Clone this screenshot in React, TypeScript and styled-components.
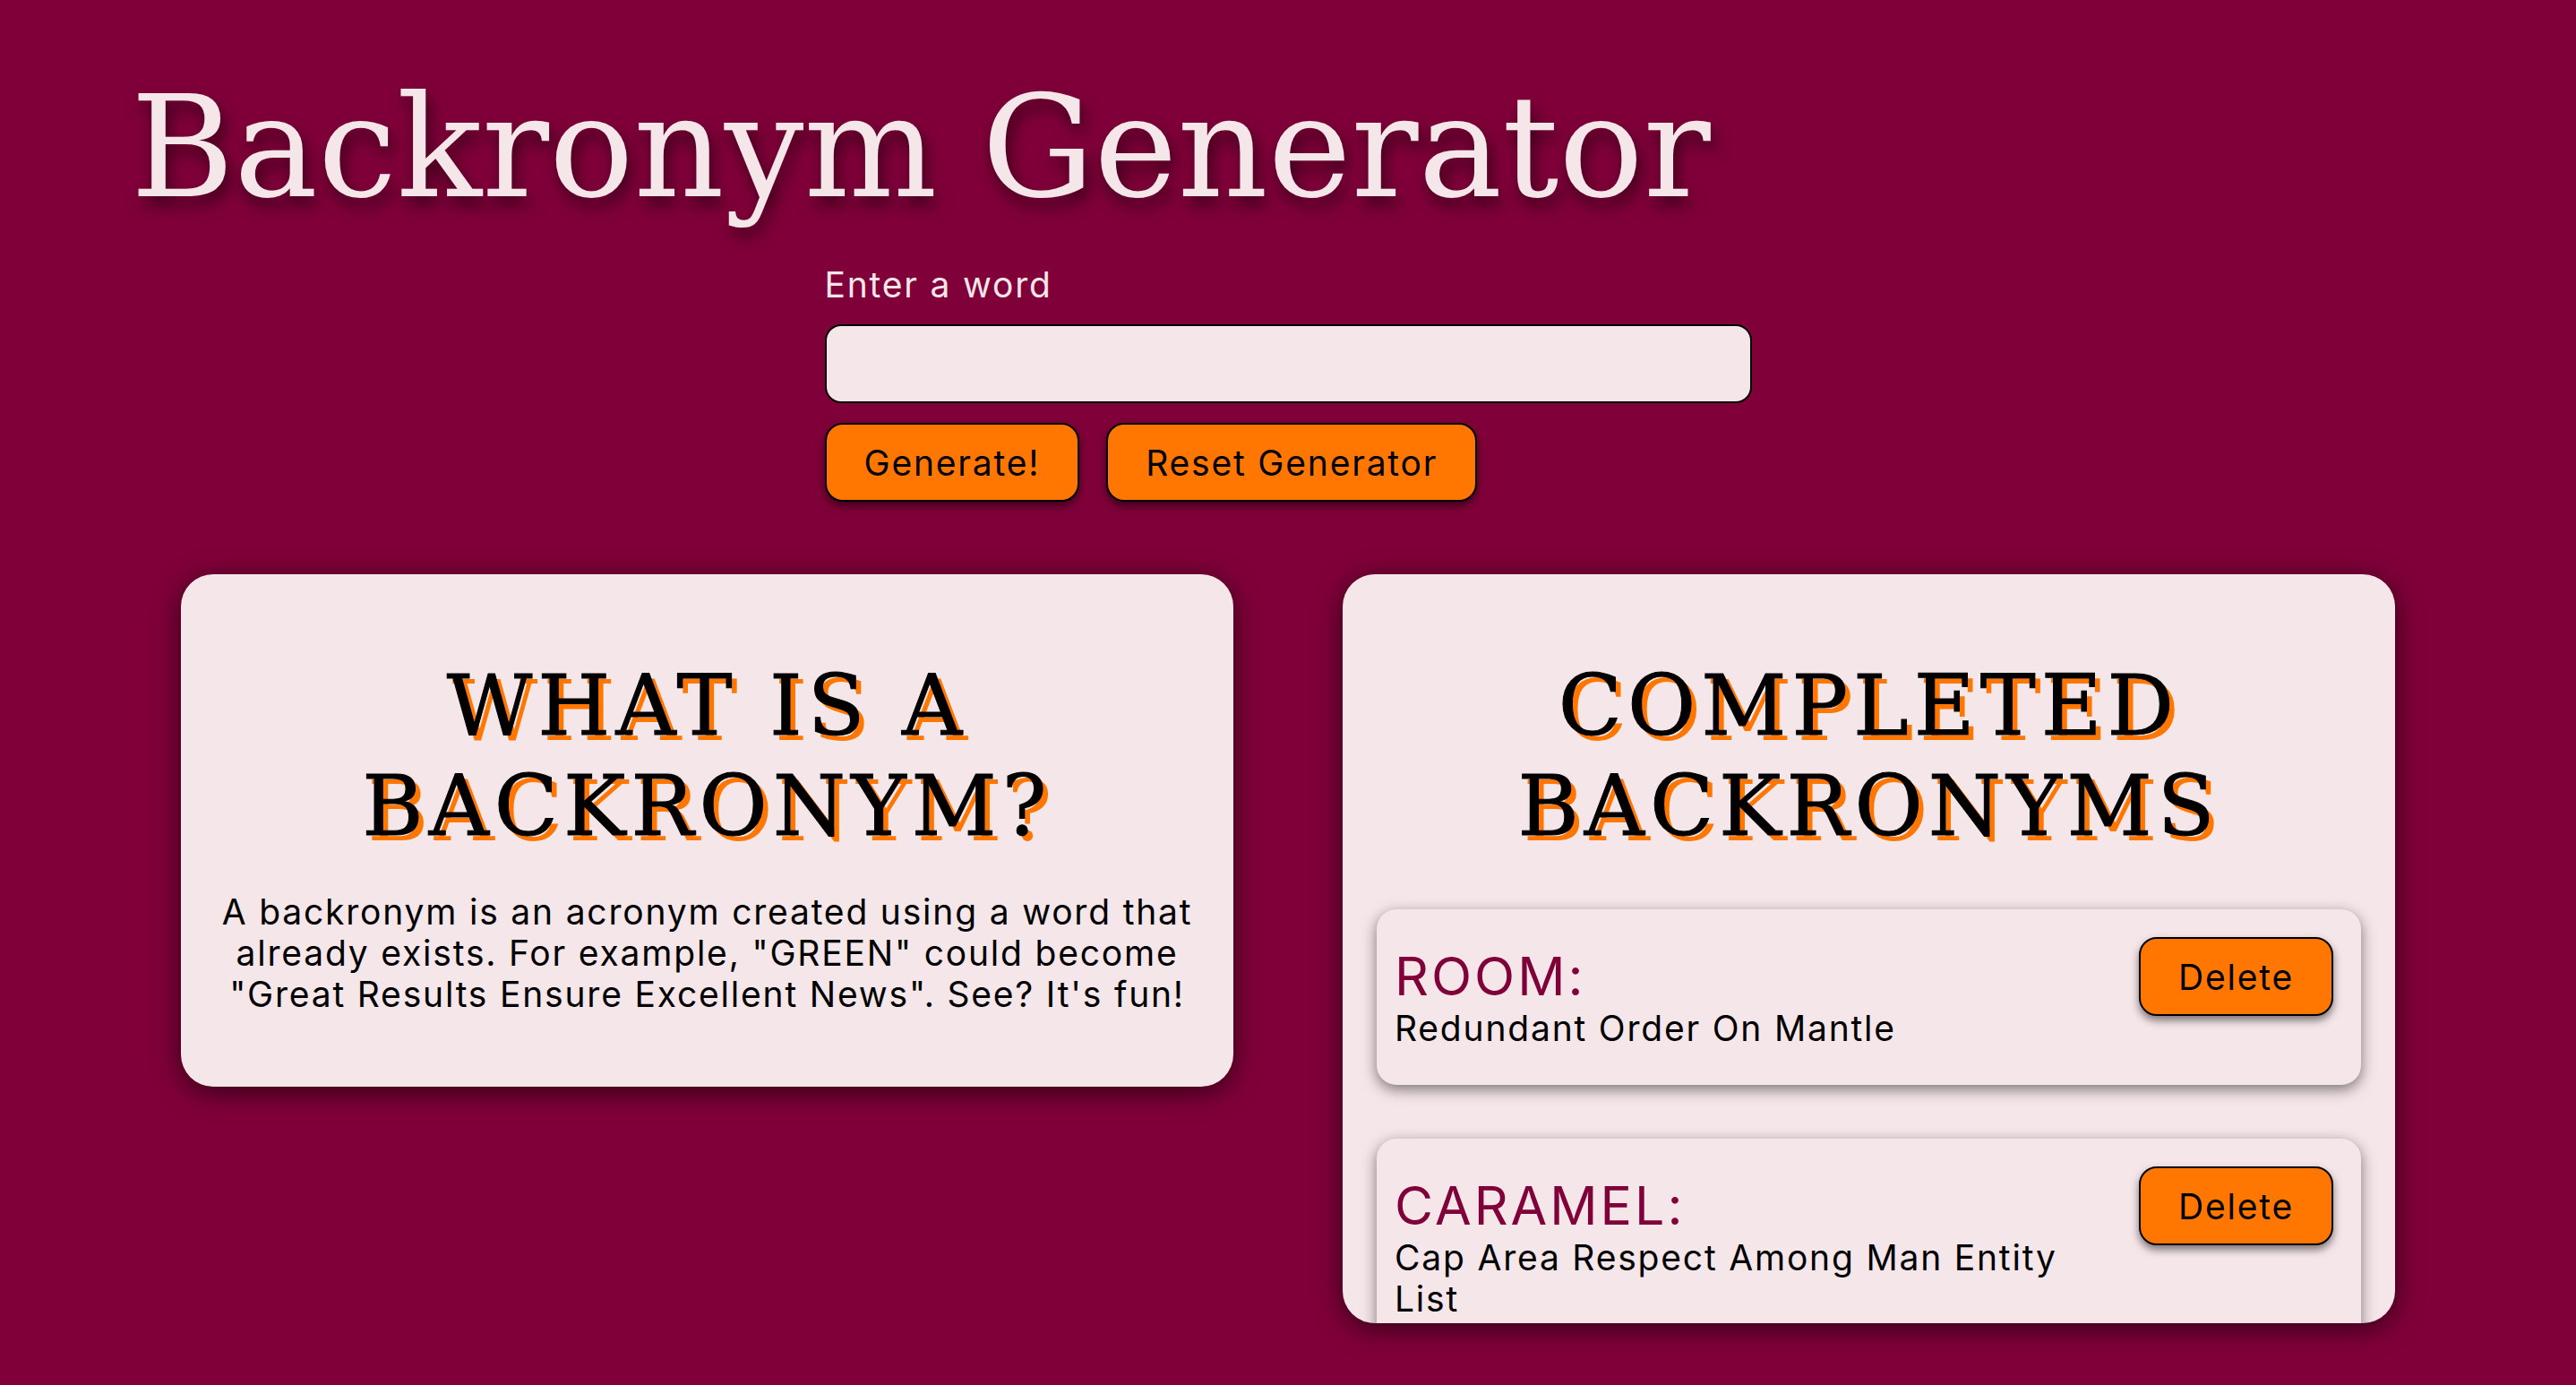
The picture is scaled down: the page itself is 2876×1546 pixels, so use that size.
import React from "react";
import styled, { createGlobalStyle } from "styled-components";

const BG = "#800039";
const PAPER = "#f5e6e9";
const ORANGE = "#ff7700";

const Global = createGlobalStyle`
  html, body { margin: 0; padding: 0; }
  body {
    background: ${BG};
    font-family: "Inter", "Open Sans", sans-serif;
    min-height: 1546px;
    overflow: hidden;
  }
`;

const Page = styled.div`
  width: 2876px;
  min-height: 1546px;
  display: flex;
  flex-direction: column;
`;

const Title = styled.h1`
  margin: 72px 0 0 0;
  padding-left: 146px;
  font-family: "DejaVu Serif", "Liberation Serif", serif;
  font-weight: 400;
  font-size: 157px;
  line-height: 186px;
  color: ${PAPER};
  text-shadow: 4px 10px 18px rgba(0, 0, 0, 0.55);
`;

const Form = styled.div`
  width: 1035px;
  margin: 36px auto 0;
  display: flex;
  flex-direction: column;
`;

const Label = styled.label`
  font-size: 39px;
  line-height: 48px;
  letter-spacing: 1.8px;
  color: ${PAPER};
  font-weight: 400;
`;

const Input = styled.input`
  margin-top: 20px;
  box-sizing: border-box;
  height: 88px;
  width: 100%;
  background: ${PAPER};
  border: 2px solid #000;
  border-radius: 18px;
  font-family: inherit;
  font-size: 39px;
  padding: 0 20px;
  outline: none;
`;

const ButtonRow = styled.div`
  margin-top: 22px;
  display: flex;
  gap: 30px;
`;

const Button = styled.button`
  box-sizing: border-box;
  height: 88px;
  padding: 0 42px;
  background: ${ORANGE};
  border: 2px solid #000;
  border-radius: 20px;
  font-family: "Inter", "Open Sans", sans-serif;
  font-size: 39px;
  letter-spacing: 1.8px;
  color: #000;
  box-shadow: 0 5px 10px rgba(0, 0, 0, 0.5);
  cursor: pointer;
  flex: none;
`;

const Columns = styled.div`
  margin-top: 81px;
  padding: 0 202px;
  display: grid;
  grid-template-columns: 1fr 1fr;
  gap: 122px;
  align-items: start;
`;

const Card = styled.section<{ $fixed?: boolean }>`
  box-sizing: border-box;
  background: ${PAPER};
  border-radius: 36px;
  box-shadow: 0 6px 30px rgba(0, 0, 0, 0.6);
  padding: 91px ${(p) => (p.$fixed ? "38px 0" : "40px 80px")};
  height: ${(p) => (p.$fixed ? "836px" : "auto")};
  overflow: hidden;
`;

const Heading = styled.h2`
  margin: 0;
  font-family: "DejaVu Serif", "Liberation Serif", serif;
  font-weight: 400;
  font-size: 93px;
  line-height: 112px;
  letter-spacing: 6px;
  text-align: center;
  color: #000;
  -webkit-text-stroke: 1px #000;
  text-shadow: 6px 6px 0 ${ORANGE};
`;

const Paragraph = styled.p`
  margin: 39px 0 0;
  font-size: 39px;
  line-height: 46px;
  letter-spacing: 1.8px;
  text-align: center;
  color: #000;
`;

const List = styled.div`
  margin-top: 59px;
  display: flex;
  flex-direction: column;
  gap: 60px;
`;

const Item = styled.div`
  background: ${PAPER};
  border-radius: 22px;
  box-shadow: 0 5px 16px rgba(0, 0, 0, 0.5);
  padding: 31px 31px 40px 20px;
  display: flex;
  align-items: flex-start;
  gap: 30px;
`;

const ItemText = styled.div`
  flex: 1;
  padding-top: 9px;
`;

const Word = styled.div`
  font-size: 59px;
  line-height: 70px;
  letter-spacing: 3px;
  color: ${BG};
`;

const Expansion = styled.div`
  font-size: 39px;
  line-height: 46px;
  letter-spacing: 1.8px;
  color: #000;
`;

const items = [
  { word: "ROOM", text: "Redundant Order On Mantle" },
  { word: "CARAMEL", text: "Cap Area Respect Among Man Entity List" },
];

export default function App() {
  return (
    <Page>
      <Global />
      <Title>Backronym Generator</Title>
      <Form>
        <Label htmlFor="word">Enter a word</Label>
        <Input id="word" type="text" />
        <ButtonRow>
          <Button>Generate!</Button>
          <Button>Reset Generator</Button>
        </ButtonRow>
      </Form>
      <Columns>
        <Card>
          <Heading>WHAT IS A BACKRONYM?</Heading>
          <Paragraph>
            A backronym is an acronym created using a word that already exists. For example,
            "GREEN" could become "Great Results Ensure Excellent News". See? It's fun!
          </Paragraph>
        </Card>
        <Card $fixed>
          <Heading>COMPLETED BACKRONYMS</Heading>
          <List>
            {items.map((it) => (
              <Item key={it.word}>
                <ItemText>
                  <Word>{it.word}:</Word>
                  <Expansion>{it.text}</Expansion>
                </ItemText>
                <Button>Delete</Button>
              </Item>
            ))}
          </List>
        </Card>
      </Columns>
    </Page>
  );
}
